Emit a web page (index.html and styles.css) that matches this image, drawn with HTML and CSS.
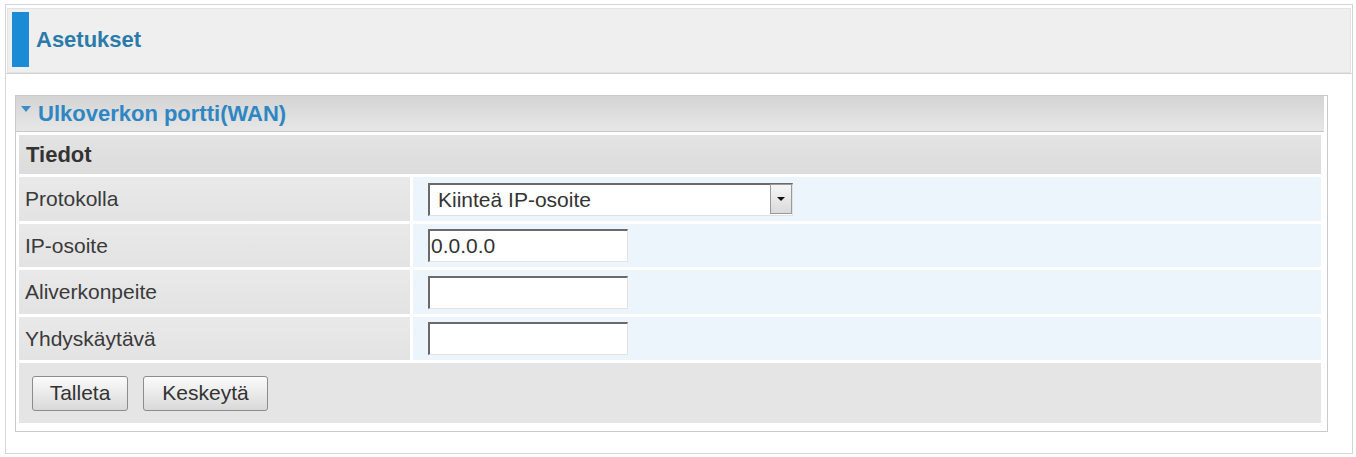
FILE: index.html
```html
<!DOCTYPE html>
<html lang="fi">
<head>
<meta charset="utf-8">
<title>Asetukset</title>
<link rel="stylesheet" href="styles.css">
</head>
<body>
<div class="frame">
  <div class="top">
    <div class="header">
      <span class="bar"></span>
      <h1 class="page-title">Asetukset</h1>
    </div>
  </div>
  <div class="panel">
    <div class="panel-title"><span class="tri"></span>Ulkoverkon portti(WAN)</div>
    <table class="form">
      <tr class="row-section"><th colspan="2" class="section">Tiedot</th></tr>
      <tr class="row-a">
        <td class="label">Protokolla</td>
        <td class="value">
          <div class="select">
            <select class="select-input"><option>Kiinteä IP-osoite</option></select>
            <span class="arrow"></span>
          </div>
        </td>
      </tr>
      <tr class="row-b">
        <td class="label">IP-osoite</td>
        <td class="value"><input class="text" type="text" value="0.0.0.0"></td>
      </tr>
      <tr class="row-a">
        <td class="label">Aliverkonpeite</td>
        <td class="value"><input class="text" type="text" value=""></td>
      </tr>
      <tr class="row-b">
        <td class="label">Yhdyskäytävä</td>
        <td class="value"><input class="text" type="text" value=""></td>
      </tr>
      <tr class="row-actions">
        <td colspan="2" class="actions">
          <div class="buttons">
            <button class="btn btn-save" type="button">Talleta</button>
            <button class="btn btn-cancel" type="button">Keskeytä</button>
          </div>
        </td>
      </tr>
    </table>
  </div>
</div>
</body>
</html>
```
FILE: styles.css
```css
* { box-sizing: border-box; }

body {
  margin: 0;
  background: #ffffff;
  font-family: "Liberation Sans", Arial, sans-serif;
  color: #333333;
}

.frame {
  margin: 4px 3px 0 5px;
  height: 450px;
  border: 1px solid #d4d4d4;
}

.top {
  padding: 3px 1px 0 1px;
  border-bottom: 1px solid #d2d2d2;
}

.header {
  height: 65px;
  background: #efefef;
  border: 1px solid #e3e3e3;
  display: flex;
  align-items: center;
  padding-left: 4px;
}

.bar {
  width: 17px;
  height: 55px;
  margin-bottom: 2px;
  background: #1b8bd6;
  margin-right: 7px;
}

.page-title {
  margin: 0 0 2px 0;
  font-size: 22px;
  font-weight: bold;
  color: #2b7baa;
}

.panel {
  margin: 21px 0 0 9px;
  width: 1313px;
  border: 1px solid #cacaca;
  padding: 0 3px 5px 0;
}

.panel-title {
  height: 36px;
  background: linear-gradient(#d4d4d4, #e7e7e7);
  border-bottom: 1px solid #bfcbd4;
  display: flex;
  align-items: center;
  padding-left: 5px;
  font-size: 22px;
  font-weight: bold;
  color: #2e86c2;
}

.tri {
  width: 0;
  height: 0;
  border-left: 5px solid transparent;
  border-right: 5px solid transparent;
  border-top: 6px solid #3a8fc8;
  margin-right: 7px;
  margin-bottom: 9px;
}

.form {
  border-spacing: 3px;
  width: 1308px;
}

.form td, .form th {
  padding: 0;
  vertical-align: middle;
}

.row-section { height: 39px; }
.row-a { height: 44px; }
.row-b { height: 43px; }
.row-actions { height: 60px; }

.section {
  background: linear-gradient(#e3e3e3, #dcdcdc);
  font-size: 22px;
  font-weight: bold;
  text-align: left;
  color: #333333;
  padding-left: 7px !important;
}

.label {
  width: 391px;
  background: linear-gradient(#e9e9e9, #e3e3e3);
  font-size: 21px;
  color: #3a3a3a;
  padding-left: 6px !important;
}

.value {
  background: #ecf4fc;
  padding-left: 15px !important;
}

.text {
  display: block;
  width: 200px;
  height: 33px;
  margin: 0;
  border-top: 2px solid #6a6a6a;
  border-left: 2px solid #6a6a6a;
  border-right: 1px solid #e2e2e2;
  border-bottom: 1px solid #e2e2e2;
  background: #ffffff;
  font-family: "Liberation Sans", Arial, sans-serif;
  font-size: 21px;
  color: #333333;
  padding: 0 0 0 1px;
  outline: none;
}

.select {
  position: relative;
  width: 365px;
  height: 33px;
}

.select-input {
  appearance: none;
  -webkit-appearance: none;
  display: block;
  width: 100%;
  height: 100%;
  margin: 0;
  border-top: 2px solid #6a6a6a;
  border-left: 2px solid #6a6a6a;
  border-right: 1px solid #e2e2e2;
  border-bottom: 1px solid #e2e2e2;
  border-radius: 0;
  background: #ffffff;
  font-family: "Liberation Sans", Arial, sans-serif;
  font-size: 21px;
  color: #333333;
  padding: 0 0 0 8px;
  outline: none;
}

.arrow {
  position: absolute;
  right: 1px;
  top: 1px;
  width: 22px;
  height: 30px;
  border: 1px solid #9a9a9a;
  background: linear-gradient(#f6f6f6, #dadada);
  display: flex;
  align-items: center;
  justify-content: center;
}

.arrow::after {
  content: "";
  width: 0;
  height: 0;
  border-left: 4px solid transparent;
  border-right: 4px solid transparent;
  border-top: 4px solid #111111;
}

.actions {
  background: #e5e5e5;
  padding-left: 13px !important;
}

.buttons {
  display: flex;
  gap: 15px;
}

.btn {
  height: 35px;
  margin: 0;
  border: 1px solid #8c8c8c;
  border-radius: 3px;
  background: linear-gradient(#fbfbfb, #d9d9d9);
  font-family: "Liberation Sans", Arial, sans-serif;
  font-size: 21px;
  color: #333333;
  padding: 0;
  text-align: center;
}

.btn-save { width: 96px; }
.btn-cancel { width: 125px; }
```
